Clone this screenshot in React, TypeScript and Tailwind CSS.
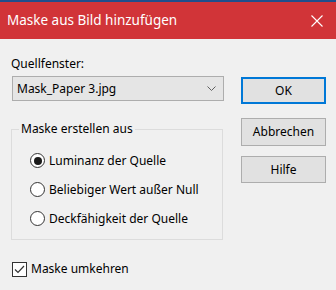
import React from "react";
import { useState } from "react";

const Radio = ({ checked, label, onClick }: { checked: boolean; label: string; onClick: () => void }) => (
  <label className="flex h-[29px] cursor-default items-center" onClick={onClick}>
    <span className="flex h-[15px] w-[15px] items-center justify-center rounded-full border border-[#333333] bg-white">
      {checked && <span className="h-[8px] w-[8px] rounded-full bg-[#1a1a1a]" />}
    </span>
    <span className="ml-[4px] leading-[16px]">{label}</span>
  </label>
);

const App = () => {
  const [mode, setMode] = useState(0);
  const [invert, setInvert] = useState(true);

  const options = ["Luminanz der Quelle", "Beliebiger Wert außer Null", "Deckfähigkeit der Quelle"];

  return (
    <div className="h-[290px] w-[336px] overflow-hidden bg-[#f0f0f0] font-['Noto_Sans',sans-serif] text-[12px] text-black">
      <div className="flex h-[39px] items-center justify-between border-t-2 border-[#1e4e8c] bg-[#d13438] pl-[7px] pr-[13px] text-white">
        <span className="text-[13.5px]">Maske aus Bild hinzufügen</span>
        <svg width="12" height="12" viewBox="0 0 12 12" className="mt-[1px]">
          <path d="M0.5 0.5 L11.5 11.5 M11.5 0.5 L0.5 11.5" stroke="white" strokeWidth="1.1" fill="none" />
        </svg>
      </div>

      <div className="flex pl-[11px]">
        <div className="flex w-[213px] flex-col pt-[17px]">
          <div className="h-[16px] leading-[16px]">Quellfenster:</div>
          <div className="ml-[1px] mt-[4px] flex h-[25px] w-[212px] items-center justify-between border border-[#adadad] bg-[#e5e5e5] pl-[4px] pr-[7px]">
            <span>Mask_Paper 3.jpg</span>
            <svg width="9" height="5" viewBox="0 0 9 5">
              <path d="M0.5 0.5 L4.5 4.5 L8.5 0.5" stroke="#606060" strokeWidth="1" fill="none" />
            </svg>
          </div>

          <fieldset className="mt-[20px] w-[212px] border border-[#dcdcdc] pb-[6px] pl-[18px]">
            <legend className="-ml-[11px] px-[2px] leading-[16px]">Maske erstellen aus</legend>
            <div className="mt-[9px] flex flex-col">
              {options.map((opt, i) => (
                <Radio key={opt} checked={mode === i} label={opt} onClick={() => setMode(i)} />
              ))}
            </div>
          </fieldset>

          <label className="ml-[1px] mt-[21px] flex h-[16px] items-center" onClick={() => setInvert(!invert)}>
            <span className="flex h-[15px] w-[15px] items-center justify-center border border-[#333333] bg-white">
              {invert && (
                <svg width="11" height="9" viewBox="0 0 11 9">
                  <path d="M1 4.5 L4 7.5 L10 1" stroke="#333333" strokeWidth="1.2" fill="none" />
                </svg>
              )}
            </span>
            <span className="ml-[4px]">Maske umkehren</span>
          </label>
        </div>

        <div className="ml-[17px] flex w-[85px] flex-col pt-[38px]">
          <button className="h-[27px] border-2 border-[#0078d7] bg-[#e1e1e1]">OK</button>
          <button className="mt-[14px] h-[28px] border border-[#adadad] bg-[#e1e1e1]">Abbrechen</button>
          <button className="mt-[10px] h-[27px] border border-[#adadad] bg-[#e1e1e1]">Hilfe</button>
        </div>
      </div>
    </div>
  );
};

export default App;
